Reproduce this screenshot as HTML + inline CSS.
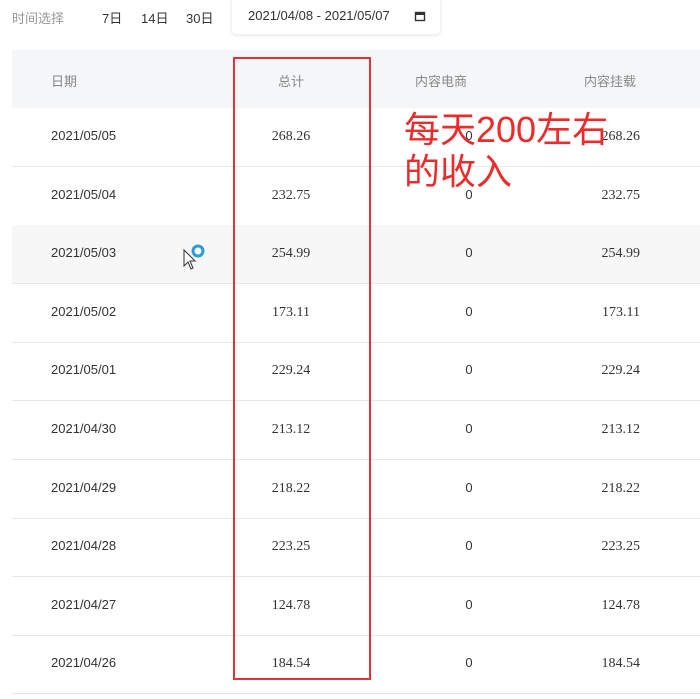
<!DOCTYPE html>
<html><head><meta charset="utf-8"><style>
body{margin:0;width:700px;height:699px;background:#fff;font-family:"Liberation Sans","Noto Sans CJK SC",sans-serif;position:relative;overflow:hidden;color:#333}
.a{position:absolute;white-space:nowrap}
.top{font-size:13px;color:#333;top:8px}
.hdr{position:absolute;left:12px;top:50px;width:688px;height:58px;background:#f5f6f8}
.row{position:absolute;left:12px;width:688px;height:58px;border-bottom:1px solid #e8e8e8}
.c{position:absolute;font-size:13px;color:#333;transform:translateX(-50%)}
.r{position:absolute;font-size:13px;color:#333;transform:translateX(-100%)}
</style></head><body>
<div class="a top" style="left:12px;color:#999">时间选择</div>
<div class="a top" style="left:102px">7日</div>
<div class="a top" style="left:141px">14日</div>
<div class="a top" style="left:186px">30日</div>
<div class="a" style="left:232px;top:-4px;width:208px;height:38px;border-radius:4px;box-shadow:0 1px 4px rgba(0,0,0,.12);background:#fff"></div>
<div class="a top" style="left:248px">2021/04/08 - 2021/05/07</div>
<svg class="a" style="left:414px;top:10px" width="12" height="12"><rect x="1.5" y="2.5" width="9" height="8" fill="none" stroke="#333" stroke-width="1.4"/><rect x="1.5" y="2.5" width="9" height="2.5" fill="#333"/></svg>
<div class="hdr"></div>
<div class="a" style="left:51px;top:71px;font-size:13px;color:#888">日期</div>
<div class="c" style="left:291px;top:71px;color:#888">总计</div>
<div class="c" style="left:441px;top:71px;color:#888">内容电商</div>
<div class="c" style="left:610px;top:71px;color:#888">内容挂载</div>
<div id="rows"></div>
<script>
var d=[["05/05","268.26"],["05/04","232.75"],["05/03","254.99"],["05/02","173.11"],["05/01","229.24"],["04/30","213.12"],["04/29","218.22"],["04/28","223.25"],["04/27","124.78"],["04/26","184.54"]];
var h="";
for(var i=0;i<d.length;i++){var t=108+i*58.6;
h+='<div class="row" style="top:'+t+'px;'+(i==2?'background:#f7f7f7':'')+'"></div>';
var y=t+20;
h+='<div class="a" style="left:51px;top:'+y+'px;font-size:13px">2021/'+d[i][0]+'</div>';
h+='<div class="c" style="left:291px;top:'+(y+1)+'px;font-family:Liberation Serif,serif;font-size:14px">'+d[i][1]+'</div>';
h+='<div class="c" style="left:469px;top:'+y+'px">0</div>';
h+='<div class="r" style="left:640px;top:'+(y+1)+'px;font-family:Liberation Serif,serif;font-size:14px">'+d[i][1]+'</div>';}
document.getElementById("rows").innerHTML=h;
</script>
<div class="a" style="left:233px;top:57px;width:134px;height:619px;border:2px solid #e0343c"></div>
<div class="a" style="left:404px;top:109px;font-size:36px;color:#ee2b2b;line-height:42px">每天200左右<br>的收入</div>
<svg class="a" style="left:182px;top:242px" width="26" height="30"><circle cx="16" cy="9" r="5" fill="none" stroke="#2a9be0" stroke-width="3"/><path d="M2 8 L2 24 L6 20 L9 27 L11 26 L8 19 L13 19 Z" fill="#fff" stroke="#333" stroke-width="1"/></svg>
</body></html>
